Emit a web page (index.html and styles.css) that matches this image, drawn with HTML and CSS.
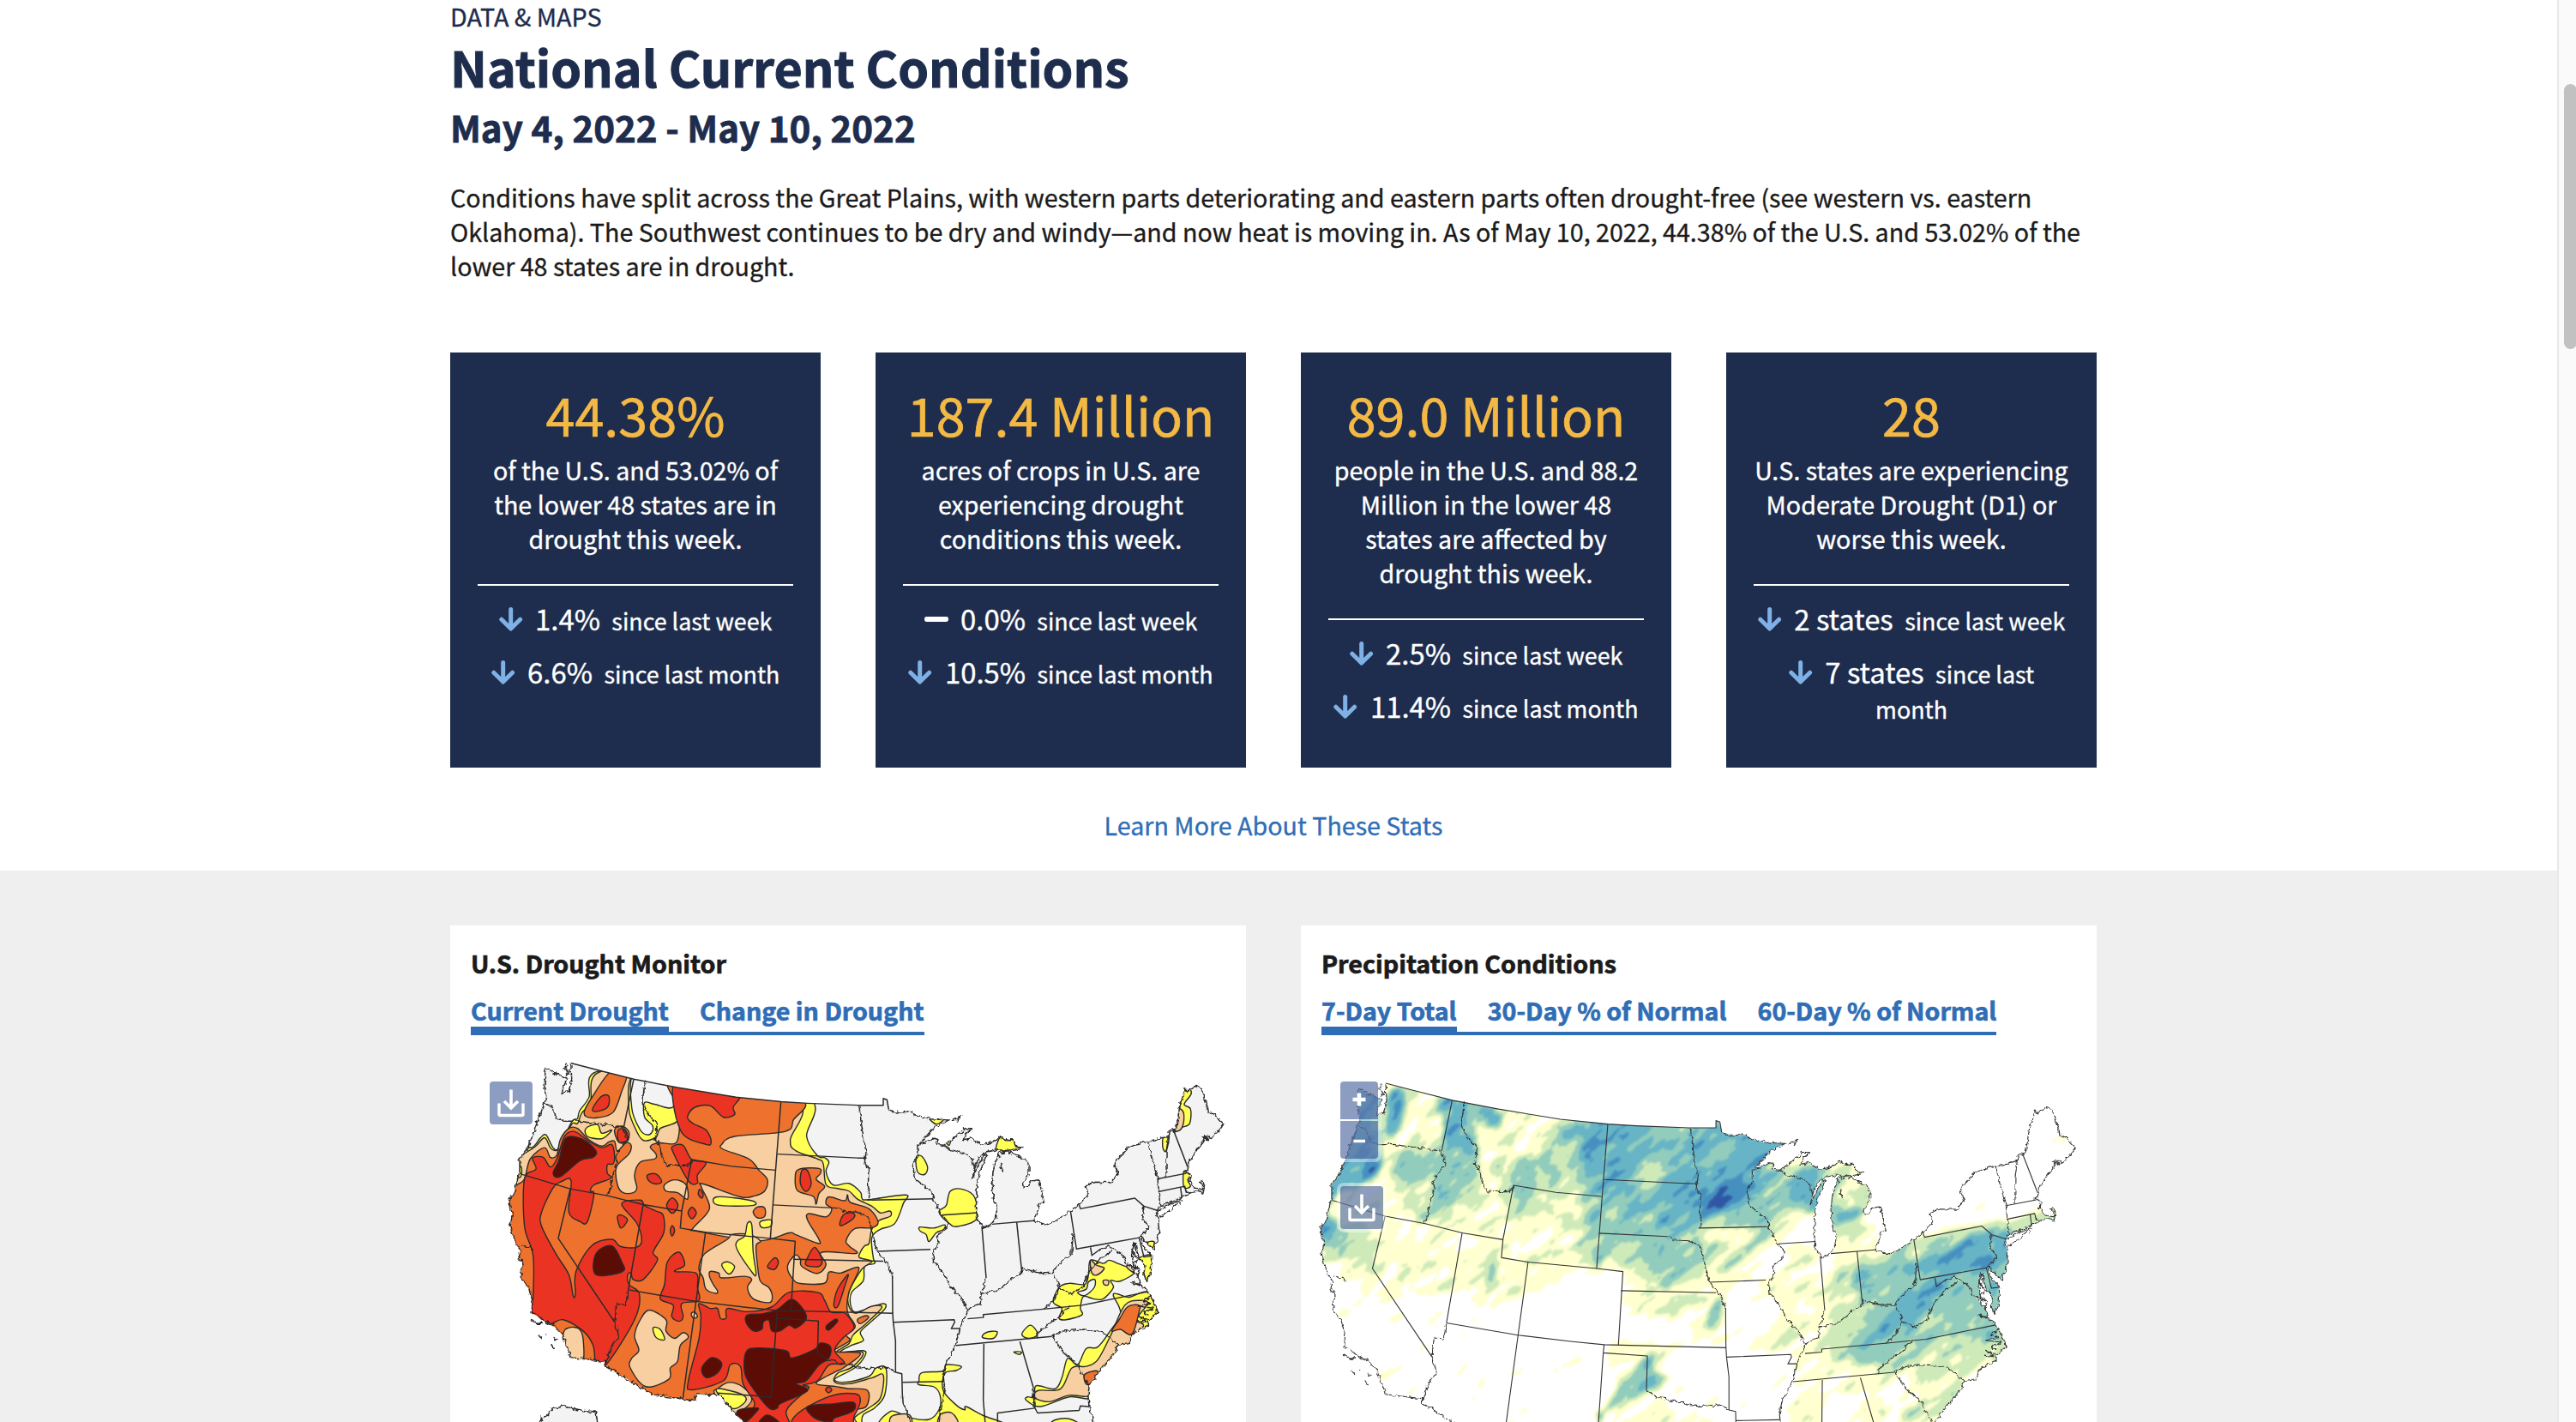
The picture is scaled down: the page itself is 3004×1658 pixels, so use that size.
FILE: index.html
```
<!DOCTYPE html>
<html lang="en">
<head>
<meta charset="utf-8">
<title>National Current Conditions</title>
<link rel="stylesheet" href="styles.css">
</head>
<body>
<svg class="sprite" aria-hidden="true">
  <symbol id="down" viewBox="0 0 28 28"><path d="M13.7 2.6V24M2.8 14.2L13.7 25L24.6 14.2" fill="none" stroke="#7fb1e6" stroke-width="5" stroke-linecap="round" stroke-linejoin="round"/></symbol>
  <symbol id="flat" viewBox="0 0 28 28"><rect x="0" y="11" width="28" height="6" rx="2.4" fill="#fff"/></symbol>
  <symbol id="save" viewBox="0 0 50 50"><path d="M25 9.5V31M17 23l8 8 8-8" fill="none" stroke="#fff" stroke-width="3.6"/><path d="M11 25.5v12.500q0 1.500 1.500 1.500h25q1.500 0 1.500-1.500v-12.500" fill="none" stroke="#fff" stroke-width="3.4"/></symbol>
</svg>
<div class="page">
  <main class="content">
    <section class="intro wrap">
      <p class="eyebrow">DATA &amp; MAPS</p>
      <h1 class="title">National Current Conditions</h1>
      <h2 class="dates">May 4, 2022 - May 10, 2022</h2>
      <p class="summary">Conditions have split across the Great Plains, with western parts deteriorating and eastern parts often drought-free (see western vs. eastern Oklahoma). The Southwest continues to be dry and windy—and now heat is moving in. As of May 10, 2022, 44.38% of the U.S. and 53.02% of the lower 48 states are in drought.</p>
      <div class="stats">
        <article class="stat">
          <p class="figure">44.38%</p>
          <p class="about">of the U.S. and 53.02% of the lower 48 states are in drought this week.</p>
          <hr class="rule">
          <p class="trend"><svg class="icon"><use href="#down"/></svg>1.4% <span class="since">since last week</span></p>
          <p class="trend"><svg class="icon"><use href="#down"/></svg>6.6% <span class="since">since last month</span></p>
        </article>
        <article class="stat">
          <p class="figure">187.4 Million</p>
          <p class="about">acres of crops in U.S. are experiencing drought conditions this week.</p>
          <hr class="rule">
          <p class="trend"><svg class="icon"><use href="#flat"/></svg>0.0% <span class="since">since last week</span></p>
          <p class="trend"><svg class="icon"><use href="#down"/></svg>10.5% <span class="since">since last month</span></p>
        </article>
        <article class="stat">
          <p class="figure">89.0 Million</p>
          <p class="about">people in the U.S. and 88.2 Million in the lower 48 states are affected by drought this week.</p>
          <hr class="rule">
          <p class="trend"><svg class="icon"><use href="#down"/></svg>2.5% <span class="since">since last week</span></p>
          <p class="trend"><svg class="icon"><use href="#down"/></svg>11.4% <span class="since">since last month</span></p>
        </article>
        <article class="stat">
          <p class="figure">28</p>
          <p class="about">U.S. states are experiencing Moderate Drought (D1) or worse this week.</p>
          <hr class="rule">
          <p class="trend"><svg class="icon"><use href="#down"/></svg>2 states <span class="since">since last week</span></p>
          <p class="trend"><svg class="icon"><use href="#down"/></svg>7 states <span class="since">since last month</span></p>
        </article>
      </div>
      <p class="more"><a class="link" href="#">Learn More About These Stats</a></p>
    </section>
    <section class="maps">
      <div class="panels wrap">
        <article class="panel">
          <h3 class="panel-title">U.S. Drought Monitor</h3>
          <nav class="tabs"><a class="tab active" href="#">Current Drought</a><a class="tab" href="#">Change in Drought</a></nav>
          <div class="map">
            <svg id="drought" class="canvas" viewBox="15 400 2784 1168" preserveAspectRatio="none"></svg>
            <div class="controls controls-drought">
              <button class="btn save" aria-label="Download"><svg class="glyph"><use href="#save"/></svg></button>
            </div>
          </div>
        </article>
        <article class="panel">
          <h3 class="panel-title">Precipitation Conditions</h3>
          <nav class="tabs"><a class="tab active" href="#">7-Day Total</a><a class="tab" href="#">30-Day % of Normal</a><a class="tab" href="#">60-Day % of Normal</a></nav>
          <div class="map">
            <svg id="precip" class="canvas" viewBox="21 400 2784 1168" preserveAspectRatio="none"></svg>
            <div class="controls controls-precip">
              <div class="halo zoomer">
                <button class="btn zoom-in" aria-label="Zoom in"><svg class="sign" viewBox="0 0 44 40"><path d="M14.500 19H29.500M22 11.500V26.500" stroke="#fff" stroke-width="4.500"/></svg></button>
                <button class="btn zoom-out" aria-label="Zoom out"><svg class="sign" viewBox="0 0 44 40"><path d="M15.500 21.500H29" stroke="#fff" stroke-width="3.500"/></svg></button>
              </div>
              <div class="halo">
                <button class="btn save" aria-label="Download"><svg class="glyph"><use href="#save"/></svg></button>
              </div>
            </div>
          </div>
        </article>
      </div>
    </section>
  </main>
  <div class="scrollbar"><div class="thumb"></div></div>
</div>
<script src="map.js"></script>
</body>
</html>
```
FILE: styles.css
```
* { box-sizing: border-box; }
body {
  margin: 0;
  height: 1658px;
  overflow: hidden;
  background: #fff;
  color: #1b1b1b;
  font-family: "Noto Sans CJK SC", "Noto Sans", sans-serif;
  font-size: 28.66px;
  line-height: 40px;
  -webkit-text-stroke: .35px;
}
h1, h2, h3, p { margin: 0; }
.sprite { display: none; }
.page { display: flex; height: 1658px; }
.content { flex: 1; overflow: hidden; }
.wrap { width: 1920px; margin-left: 525px; }

.eyebrow { color: #1e2d4d; font-size: 28.7px; line-height: 37px; }
.title { margin-top: 4.5px; color: #1e2d4d; font-size: 57.3px; line-height: 72px; -webkit-text-stroke: 1px; }
.dates { margin-top: 6px; color: #1e2d4d; font-size: 42.05px; line-height: 56px; -webkit-text-stroke: .8px; }
.summary { margin-top: 34px; }

.stats { display: grid; grid-template-columns: repeat(4, 432px); gap: 64px; margin-top: 81.5px; height: 484px; }
.stat { padding: 36px 32px 0; background: #1e2d4d; color: #fff; text-align: center; }
.figure { margin: 0 -16px 8.500px; color: #f4b944; font-size: 61.1px; line-height: 72px; -webkit-text-stroke: .7px; }
.rule { height: 2px; margin: 33px 0 18.500px; border: 0; background: #fff; }
.trend { margin-bottom: 21.400px; font-size: 32.9px; line-height: 40.600px; }
.icon { width: 28px; height: 28px; margin-right: 14.500px; vertical-align: -1px; }
.since { margin-left: 6px; font-size: 26.85px; line-height: 1; }
.more { padding: 47px 0 33px; text-align: center; }
.link { color: #2f6eb6; text-decoration: none; }

.maps { height: 643px; padding-top: 64px; background: #efefef; }
.panels { display: grid; grid-template-columns: 928px 928px; gap: 64px; }
.panel { height: 579px; padding-top: 23.500px; background: #fff; }
.panel-title { padding-left: 24px; font-size: 28.66px; line-height: 40px; -webkit-text-stroke: .7px; }
.tabs { display: flex; width: max-content; height: 50px; margin: 14.500px 0 13px 24px; border-bottom: 4px solid #2f6eb6; }
.tab { height: 50px; color: #2f6eb6; font-size: 28.62px; font-weight: 700; line-height: 42px; text-decoration: none; -webkit-text-stroke: .7px; }
.tab + .tab { margin-left: 36px; }
.active { border-bottom: 10px solid #2f6eb6; }

.map { position: relative; height: 438px; }
.canvas { display: block; width: 928px; height: 438px; }
.controls { position: absolute; top: 37px; left: 42px; }
.controls-drought { top: 41px; left: 46px; }
.halo { width: max-content; padding: 4px; border-radius: 8px; background: rgba(255, 255, 255, .4); }
.zoomer { display: grid; gap: 2px; margin-bottom: 24px; }
.btn { display: block; padding: 0; border: 0; background: rgba(28, 60, 132, .5); }
.save { width: 50px; height: 50px; border-radius: 4px; }
.zoom-in, .zoom-out { width: 44px; height: 44px; }
.zoom-in { border-radius: 4px 4px 0 0; }
.zoom-out { border-radius: 0 0 4px 4px; }
.glyph { display: block; width: 50px; height: 50px; }
.sign { display: block; width: 44px; height: 40px; }

.scrollbar { width: 22px; padding: 98px 0 0 6px; border-left: 2px solid #e8e8e8; background: #fafafa; overflow: hidden; }
.thumb { width: 15px; height: 309px; border-radius: 8px; background: #c1c1c1; }
```
FILE: map.js
```
// Geometry is kept as "x,y x,y" strings. East coordinates are offset by 1440.
const EAST = 1440;
const parse = (s, dx = 0, dy = 0, ky = 1) =>
  s.trim().split(/\s+/).map(p => { const [x, y] = p.split(',').map(Number); return [x + dx, y * ky + dy]; });
const W = s => parse(s);
const E = s => parse(s, EAST);
const D = s => parse(s, 960, 613.3, 0.8889);
const P = s => parse(s, 870, 480, 0.8889);
const line = (pts, close) => 'M' + pts.map(p => p[0] + ' ' + p[1]).join('L') + (close ? 'Z' : '');
function smooth(pts) {
  const n = pts.length, t = 0.17, at = i => pts[(i + n) % n];
  let d = 'M' + pts[0].join(' ');
  for (let i = 0; i < n; i++) {
    const a = at(i - 1), b = at(i), c = at(i + 1), e = at(i + 2);
    d += 'C' + [b[0] + (c[0] - a[0]) * t, b[1] + (c[1] - a[1]) * t, c[0] - (e[0] - b[0]) * t, c[1] - (e[1] - b[1]) * t, c[0], c[1]].map(v => v.toFixed(1)).join(' ');
  }
  return d + 'Z';
}

const border = W('437,452 550,478 657,502 810,528 1015,558 1172,572 1265,577 1440,583 1530,583 1530,562 1543,566 1549,596');
const coast = [
  ...E('109,598 150,606 180,602 210,617 250,626 320,629 270,650 240,680 215,705 240,697 270,686 282,690 275,704 300,708 330,690 360,668 375,655 400,655 380,668 370,690 400,685 430,705 455,702 490,690 500,682 515,690 545,690 553,710 580,714 525,724 545,735 570,745 590,752 600,770 600,800 580,825 583,838 595,838 605,820 630,815 640,835 652,885 640,890 628,915 617,942 655,953 690,945 745,912 775,892 810,857 795,835 830,822 885,823 912,797 900,770 905,755 950,710 1015,695 1090,680 1093,662 1115,655 1125,600 1128,580 1145,530 1155,540 1185,524 1205,533 1228,602 1245,608 1258,622 1280,640 1255,670 1232,685 1220,678 1205,700 1185,725 1158,760 1155,785 1145,790 1165,800 1160,820 1180,840 1207,845 1208,830 1192,820 1205,818 1214,835 1208,856 1185,850 1160,858 1145,862 1130,872 1060,897 1045,920 1052,940 1055,980 1050,1000 1035,1028 1012,1012 990,990 1000,1025 1028,1050 1027,1095 1010,1132 1002,1110 1005,1080 985,1060 975,1030 970,1008 960,1040 965,1075 978,1095 945,1075 985,1120 990,1140 960,1135 1005,1148 1020,1170 1030,1185 1048,1215 1048,1230 1015,1255 1015,1270 985,1280 960,1295 948,1325 915,1328 890,1365 870,1385 840,1415 822,1440 810,1455 807,1490 810,1520 832,1580'),
  ...W('1050,1580 1035,1560 1000,1530 975,1500 960,1484 875,1480 872,1502 725,1483 552,1390 560,1380 435,1367 430,1350 410,1300 385,1275 365,1262 300,1228 303,1190 290,1155 265,1120 262,1095 270,1075 255,1055 262,1035 245,1015 225,960 232,920 220,880 240,855 248,820 258,790 258,750 285,720 300,685 335,595 345,575 352,550 345,530 348,465 375,482 400,490 425,500 412,525 405,545 430,540 440,500 437,452')
];
const land = [...border, ...coast];
const lake = E('525,724 495,732 478,770 470,820 475,870 487,905 485,935 465,955 445,962 420,945 415,900 418,830 430,780 455,735 440,740 420,775 402,808 410,780 425,745 455,727 490,722');
const alaska = W('325,1575 335,1555 355,1548 375,1525 410,1517 445,1527 490,1533 525,1537 531,1575');
const straight = [
  W('657,502 622,652'), W('262,797 435,843 568,865 690,892 825,912'), W('435,843 393,997 590,1257'),
  W('690,892 638,1157'), W('638,1157 875,1193 1055,1212 1160,1221 1563,1230'), W('825,912 820,965 908,978 875,1193 829,1495'),
  W('908,978 1135,997 1222,1006 1207,1222'), W('860,752 825,912'), W('860,752 1000,773 1152,785'), W('1172,572 1135,997'),
  W('1160,735 1440,747 1472,747'), W('1143,893 1370,903'), W('1160,1221 1157,1245 1303,1254 1300,1357'), W('1157,1245 1138,1490 950,1478'),
  W('1215,1062 1530,1068'), E('32,878 265,874'), D('602,562 603,692 605,725 613,790 613,900 635,905 637,980'), D('550,477 735,470'),
  D('605,725 818,716 820,725 808,747 838,747'), D('637,935 780,932'), D('915,390 930,570'), D('775,350 900,342'),
  E('470,953 617,942'), E('557,947 575,1103'), E('775,892 780,905 970,872 1002,897 1048,910'), E('745,912 766,1030 985,995 1002,1055 1028,1052'),
  E('385,1247 440,1243 440,1234 650,1217 785,1205 1015,1163'), E('345,1330 680,1302'), E('442,1325 440,1500 447,1575'), E('568,1318 615,1460'),
  E('490,1575 490,1540 620,1525'), E('618,1520 630,1540 775,1532 780,1518 808,1520'), E('1050,812 1150,795'), E('1052,852 1145,835 1150,855'),
  E('1130,838 1135,872'), E('1105,660 1155,775'), E('815,1025 820,1050 850,1030')
];
const rivers = [
  W('345,578 375,588 385,622 410,633 460,632 530,640 622,652'), W('622,652 633,690 590,745 600,760 585,800 568,865'),
  W('697,508 688,565 700,600 740,645 730,690 745,700 755,740 772,770 800,768 820,772 855,770 860,752'),
  W('590,1257 605,1300 572,1345 565,1370 555,1392'), W('638,1157 628,1205 597,1200 590,1257'), W('1300,1357 1330,1372 1380,1385 1420,1392 1470,1402 1540,1398 1573,1412'),
  E('5,583 15,650 30,730 25,760 38,785 38,877'), D('410,325 430,337 480,340 515,355 530,400 545,470 585,520 602,562'),
  D('690,100 690,145 675,170 678,220 740,270 748,300 765,335 795,375 790,400 760,420 762,450 745,480 745,510 790,570 805,600 850,650 865,685 855,710 840,745 820,810 790,870 780,910 785,960 770,1030 765,1080'),
  D('637,980 640,1010 662,1060 662,1080'), D('930,570 912,630 910,660 880,670 865,685'), E('300,708 330,722 385,735 400,750 410,785'),
  E('435,1168 490,1160 530,1130 575,1103 575,1090 640,1105 680,1105 700,1080 750,1040 753,985'), E('685,1110 708,1150 680,1195 650,1217'),
  E('1002,897 995,935 1022,962 985,995'), E('850,1030 880,1020 930,1050 940,1075'), E('708,1150 740,1170 790,1150 810,1100 850,1060 890,1035'),
  E('740,1210 700,1245 630,1290 628,1308'), E('680,1302 720,1285 795,1280 860,1290 915,1328'), E('680,1302 720,1350 770,1390 810,1455'),
  E('615,1460 618,1520'), E('1015,695 1035,765 1050,812 1058,897'), E('1087,680 1080,730 1080,805'),
  E('1055,912 1090,890 1132,880 1100,905 1055,932'), W('265,1020 280,1022 305,1030'), W('425,455 415,470 432,480 420,492'),
  E('1030,1180 1000,1190 1022,1200 982,1208 1035,1214 1002,1228 1015,1236'), E('1018,1250 985,1240 1008,1256 975,1252'), E('975,1010 962,1040 980,1060 965,1080 988,1095 978,1110 990,1130')
];
const islets = [W('295,1252 315,1258 340,1262 315,1262'), W('325,1300 332,1304'), W('352,1297 354,1299'), W('377,1302 388,1312 378,1310'), W('368,1326 378,1340'),
  E('330,632 365,615 345,636'), E('490,735 500,745 495,740'), E('500,765 508,785 500,775'), E('1145,848 1165,856'), E('1205,680 1225,690 1215,675'), E('562,712 580,716')];

const NS = 'http://www.w3.org/2000/svg';
const drought = {
  D0: [
    W('540,476 500,560 468,600 460,625 440,635 395,715 375,715 350,675 330,685 300,715 240,715 100,900 150,1200 400,1420 860,1530 1045,1600 1455,1600 1455,1573 1460,1546 1500,1524 1535,1484 1540,1402 1505,1400 1480,1426 1400,1444 1360,1435 1430,1400 1465,1364 1460,1346 1380,1351 1420,1329 1460,1315 1450,1289 1480,1262 1535,1217 1530,1200 1470,1217 1430,1226 1415,1200 1420,1164 1460,1129 1465,1084 1500,1075 1495,1057 1490,995 1520,969 1570,951 1600,889 1608,862 1475,877 1455,871 1450,853 1410,826 1355,831 1330,791 1340,760 1325,746 1300,740 1262,680 1268,560 900,500'),
    E('325,850 370,845 410,870 418,935 350,960 320,950 285,915 310,895'), E('205,745 225,742 245,775 235,798 210,790'),
    E('218,962 265,965 305,955 300,970 275,980 250,1007 240,985 220,975'), E('250,622 275,620 300,628 275,642'), E('310,695 325,692 320,708'),
    E('500,680 515,690 545,690 553,710 580,714 525,724 485,722'), E('1145,520 1168,545 1143,580 1165,595 1162,640 1135,652 1105,665 1125,600'),
    E('1070,680 1090,678 1080,725 1068,715'), E('1142,788 1168,800 1155,815 1165,835 1142,838'), E('1015,1010 1038,1008 1030,1030'),
    E('985,1060 1028,1050 1035,1095 1010,1135 1000,1090'),
    E('815,1065 860,1075 880,1065 910,1075 970,1100 920,1130 885,1128 895,1150 860,1185 825,1185 790,1178 780,1215 785,1235 730,1250 705,1245 715,1215 685,1195 705,1150 740,1137 795,1140 808,1110'),
    E('895,1175 910,1170 950,1180 1015,1163 1060,1215 1015,1280 950,1335 870,1395 820,1455 812,1495 740,1490 640,1520 590,1500 595,1490 620,1490 625,1455 690,1465 715,1430 735,1370 770,1390 800,1340 840,1335 880,1290 920,1230'),
    E('575,1295 605,1267 630,1295 600,1308'), E('437,1305 450,1290 488,1287 475,1308'), E('547,1350 573,1350 565,1358'),
    E('215,1440 225,1415 300,1410 310,1390 362,1395 345,1408 305,1417 300,1470 345,1515 375,1530 380,1520 440,1548 520,1575 520,1600 100,1600 115,1535 185,1555 250,1560 285,1530 290,1490 270,1460 215,1452'), E('690,1562 740,1558 780,1580 680,1580')
  ],
  D1: [
    W('550,476 505,575 475,608 460,640 440,642 402,712 382,724 365,715 345,684 312,712 265,735 240,720 100,900 150,1200 400,1420 860,1530 1045,1600 1425,1600 1430,1555 1480,1524 1520,1493 1530,1422 1490,1431 1410,1449 1360,1444 1370,1417 1425,1395 1458,1351 1370,1351 1410,1324 1425,1297 1470,1262 1525,1212 1490,1208 1435,1230 1410,1208 1410,1164 1455,1093 1490,1069 1447,1057 1450,1040 1465,1020 1480,1013 1490,969 1515,942 1555,928 1553,912 1520,918 1490,897 1440,875 1410,850 1370,842 1330,830 1320,765 1300,750 1225,725 1205,690 1232,570 900,500'),
    E('1122,598 1140,605 1140,640 1125,662 1105,655'), E('815,1065 835,1080 863,1090 840,1110 820,1105'), E('860,1128 878,1128 876,1142 862,1140'),
    E('935,1205 990,1190 1015,1200 975,1250 1000,1270 950,1335 870,1395 820,1455 812,1488 740,1485 670,1505 620,1492 632,1470 710,1465 750,1400 800,1395 840,1375 885,1300'),
    E('290,1545 330,1540 350,1575 285,1580'), E('120,1550 180,1545 185,1580 120,1580'), E('945,1080 975,1095 970,1105 945,1090')
  ],
  mt0: [W('657,490 640,590 660,650 690,692 735,682 750,655 810,632 808,580 800,510')],
  mtn: [W('662,480 650,590 680,660 705,675 722,665 722,645 695,620 695,575 730,580 795,588 800,510')],
  d0pass: [E('808,1133 830,1125 828,1150 795,1175 770,1165 800,1155')],
  D2: [
    W('575,480 632,485 615,540 585,605 530,622 490,618 485,600 510,560'),
    W('100,880 200,860 250,830 275,812 295,750 345,715 365,745 388,738 400,690 430,655 460,655 500,690 545,710 570,697 590,695 600,725 630,700 648,708 640,735 597,775 600,830 620,855 655,855 668,840 660,800 680,760 730,750 735,735 715,712 745,700 805,700 818,640 815,590 803,500 1230,560 1215,630 1185,665 1010,680 965,705 970,720 1060,750 1095,785 1125,815 1115,850 1080,865 1030,868 900,828 895,840 922,905 865,965 880,975 1090,1005 1200,980 1222,985 1300,1012 1305,1000 1265,940 1270,920 1330,930 1350,905 1330,890 1340,868 1395,880 1405,862 1415,885 1480,905 1512,946 1490,964 1430,967 1400,1004 1412,1022 1435,1044 1315,1040 1330,1078 1300,1106 1245,1084 1240,1062 1222,1049 1195,1085 1215,1125 1245,1138 1325,1136 1340,1102 1380,1105 1445,1089 1410,1164 1405,1226 1432,1271 1400,1297 1412,1315 1360,1348 1450,1355 1390,1400 1360,1413 1295,1448 1360,1457 1405,1464 1475,1470 1470,1520 1415,1537 1400,1600 1045,1600 870,1530 500,1430 250,1330'),
    D('275,190 345,187 350,205 335,225 365,250 345,275 335,312 325,285 270,265 262,220'), D('115,340 130,322 155,325 155,355 130,360'),
    D('480,715 510,702 518,710 490,730'), E('945,1210 985,1205 985,1225 960,1295 920,1280 890,1285 915,1250'), E('795,1420 840,1410 822,1445 800,1450'), W('590,660 615,648 640,665 635,695 605,698')
  ],
  D1b: [
    W('1000,985 985,1000 905,1045 885,1090 900,1120 910,1155 945,1168 950,1160 935,1140 922,1115 925,1100 955,1105 965,1120 1045,1115 1070,1125 1055,1150 1075,1185 1130,1197 1142,1180 1130,1150 1100,1130 1090,1080 1085,1020 1100,1005 1060,985'),
    W('410,1295 430,1275 465,1278 480,1310 475,1390 400,1380'), W('712,1220 770,1250 770,1285 800,1308 830,1290 848,1305 820,1330 810,1380 785,1400 780,1435 700,1458 645,1400 650,1370 675,1345 660,1300 680,1250'),
    W('765,830 800,815 840,830 845,875 810,855 770,850'), W('858,1232 870,1226 880,1240 866,1245'), W('950,1465 990,1445 1040,1460 1070,1500 1025,1540 990,1550 940,1480')
  ],
  D0b: [
    W('490,655 530,643 545,670 580,660 560,680 540,688 495,680'), W('950,868 1070,880 1070,895 950,893'), W('1055,950 1070,955 1075,1040 1085,1110 1065,1095 1018,1030 1020,1005 1045,990'),
    W('965,1080 985,1070 1010,1085 990,1108'), W('1100,945 1138,940 1135,960 1105,963'), W('725,1275 750,1280 765,1312 735,1305'), W('255,770 265,780 262,805 248,805'), W('945,1468 1000,1472 1048,1490 1040,1512 1000,1525')
  ],
  D3: [
    W('275,812 315,782 303,748 340,745 365,775 388,750 415,680 450,665 500,695 545,715 580,705 590,740 585,765 565,768 565,795 578,810 520,830 505,850 518,860 495,945 470,945 430,915 438,818 405,820 375,840 335,915 335,960 385,1045 430,1110 445,1175 453,1170 455,1100 510,1020 580,1000 610,1022 665,1025 685,1005 668,950 615,890 680,878 695,895 735,912 760,925 762,980 725,1040 740,1065 690,1125 655,1125 648,1105 636,1110 640,1140 677,1170 660,1250 560,1390 525,1385 515,1330 480,1285 410,1250 360,1262 300,1230 305,1180 305,1050 275,960'),
    W('515,590 545,555 570,555 565,590 520,603'), W('603,660 628,660 635,690 605,697'), W('808,500 1018,540 1005,590 1010,612 970,620 925,585 870,590 845,620 865,640 910,660 928,695 910,705 820,660'),
    W('795,710 830,708 860,752 910,762 880,800 880,825 850,820 795,730'), W('705,800 735,797 755,820 735,828 710,818'), W('792,871 812,895 792,919 772,895'), W('861,900 876,918 861,936 847,918'), W('888,844 900,860 895,872 883,860'), W('792,957 800,973 791,990 785,973'),
    W('600,930 615,925 635,940 612,965'), W('775,1070 815,1040 835,1080 800,1100 875,1105 880,1150 885,1190 825,1200 830,1240 815,1255 790,1240 795,1205 750,1185 765,1140'),
    D('285,195 305,195 318,240 300,268 280,240'), D('418,385 430,350 460,342 470,355 440,380'), D('305,500 330,463 355,505 345,530 300,525'), D('165,530 190,500 203,515 190,540'), D('447,558 410,610 397,665 412,668 435,600'), D('368,960 380,952 390,962 378,972'),
    W('885,1200 925,1215 950,1215 960,1245 980,1245 985,1215 1055,1225 1140,1210 1200,1165 1300,1165 1325,1190 1345,1225 1375,1228 1400,1232 1428,1275 1390,1306 1360,1346 1395,1386 1340,1391 1300,1440 1250,1453 1270,1462 1220,1502 1190,1537 1200,1600 1045,1600 1060,1540 1080,1510 1040,1450 1030,1395 995,1390 970,1440 860,1468 848,1440 885,1310 892,1240'),
    D('270,1045 380,985 470,975 490,1000 470,1050 440,1090 265,1090')
  ],
  D4: [
    W('420,685 480,690 525,725 515,745 470,755 400,805 375,795 395,755'), W('525,1045 580,1020 615,1070 618,1100 525,1110'), W('895,1400 930,1368 965,1385 950,1415 910,1430'),
    D('95,700 150,695 200,680 250,645 290,680 300,715 265,745 240,735 210,755 180,755 170,718 150,725 145,750 115,755 90,725'), D('370,740 400,715 410,722 380,752'),
    D('90,830 130,815 230,825 250,850 330,820 350,798 385,810 380,850 345,875 300,930 265,940 305,965 210,1010 200,1025 170,1025 110,950 85,900'), D('305,1020 400,1010 465,1005 465,1035 400,1060 385,1074 330,1060'), D('60,1035 130,1025 120,1045 90,1074 70,1084'), D('135,1084 165,1050 210,1084')
  ]
};
const colors = { D0: '#ffff54', D1: '#f7cfa0', mt0: '#ffff54', mtn: '#f3f3f3', d0pass: '#f3f3f3', D2: '#ee722e', D1b: '#f7cfa0', D0b: '#ffff54', D3: '#eb3324', D4: '#5b0c05' };

const thin = 'vector-effect="non-scaling-stroke" stroke-linejoin="round"';
const region = 'filterUnits="userSpaceOnUse" x="-100" y="300" width="3100" height="1400"';
const rough = id => `<filter id="${id}" ${region}><feTurbulence type="fractalNoise" baseFrequency=".07" numOctaves="2" seed="4"/><feDisplacementMap in="SourceGraphic" scale="17" xChannelSelector="R" yChannelSelector="G"/></filter>`;
const lines = (f, color, w) =>
  `<g fill="none" stroke="${color}" stroke-width="${w}">` +
  [border, ...straight].map(p => `<path ${thin} d="${line(p)}"/>`).join('') +
  `<g filter="url(#${f})">` + [coast, ...rivers, ...islets].map(p => `<path ${thin} d="${line(p)}"/>`).join('') + '</g></g>';

let a = `<defs>${rough('r1')}<clipPath id="land1"><path d="${line(land, 1)}"/></clipPath></defs><path fill="#f3f3f3" d="${line(land, 1)}"/><g clip-path="url(#land1)" stroke="#2b2b2b" stroke-width="1.4">`;
for (const k in drought) for (const p of drought[k]) a += `<path ${thin} fill="${colors[k]}" d="${smooth(p)}"/>`;
a += `</g><g filter="url(#r1)"><path ${thin} fill="#fff" stroke="#2b2b2b" stroke-width="1.6" d="${line(lake, 1)}"/><path ${thin} fill="#f3f3f3" stroke="#2b2b2b" stroke-width="1.6" d="${line(alaska, 1)}"/></g>` + lines('r1', '#2b2b2b', 1.5);
document.getElementById('drought').innerHTML = a;

// Rainfall: polygons by band (0 dry to 6 wettest), blurred, mixed with slanted noise, then cut into bands.
const rain = [
  [0, W('60,1125 180,1120 240,1170 330,1200 450,1170 600,1190 700,1215 820,1170 950,1140 1060,1110 1150,1110 1145,1180 1140,1320 1085,1330 1040,1600 0,1600')],
  [0, P('440,980 640,970 655,1240 560,1200 430,1160')], [0, P('650,740 770,760 820,860 700,960 645,980')], [0, P('650,1010 870,1000 840,1240 650,1240')], [0, P('290,860 480,870 500,940 290,940')],
  [0, P('700,690 820,610 830,690 740,710')], [0, P('850,575 940,530 945,600 850,600')], [0, E('700,948 950,945 1050,935 1200,890 1400,800 1400,400 700,500')], [0, E('540,935 615,900 610,960 560,960')], [0, E('420,1490 520,1490 530,1600 420,1600')],
  [0, E('620,1500 680,1440 670,1560')], [0, W('325,1080 355,1065 345,1100')], [0, W('755,1010 790,1000 770,1040')],
  [2, W('90,950 260,960 260,1050 90,1060')], [2, W('340,740 520,700 560,900 480,960 360,860')], [2, W('920,640 1100,640 1080,1080 980,1020 1000,900 870,860 860,740')], [2, W('850,880 970,920 950,960 870,920')], [2, W('700,770 850,740 850,900 740,900')],
  [2, P('200,570 400,580 600,620 500,740 380,730 230,640')], [2, P('560,590 700,600 800,530 770,600 640,700 600,660')], [2, P('390,840 480,770 560,780 500,820')], [2, E('20,900 250,880 360,890 200,960')], [2, E('440,880 570,830 540,960 440,980')],
  [2, E('240,780 420,770 560,770 500,820 400,860')], [2, E('460,1100 620,1050 740,1000 1060,950 1060,1300 950,1400 800,1420 640,1400 440,1350')], [2, E('1050,970 1220,900 1230,960 1060,1040')], [2, E('660,1540 760,1500 900,1440 880,1480 760,1570')],
  [3, W('500,560 700,590 720,660 640,650 650,760 620,860 540,890 490,850 470,780 400,820 350,790 420,730 500,740 540,700')], [3, W('760,800 830,760 840,860 790,890')], [3, W('860,740 940,740 930,800 880,800')], [3, W('250,1050 272,1060 272,1110')], [3, W('685,1040 705,1040 700,1130 670,1150')],
  [3, W('940,630 1100,640 1080,1060 1040,1040 1010,860 930,740')], [3, W('1095,600 1480,600 1740,690 1610,780 1800,790 1880,850 1850,920 1680,900 1660,960 1440,970 1400,1060 1300,1160 1250,1100 1150,1000 1060,1010')],
  [3, P('390,600 550,590 545,650 480,680 400,680')], [3, P('640,670 780,550 790,570 680,665')], [3, P('570,880 600,790 630,820 600,900')], [3, P('300,1060 350,1000 385,980 380,1040 440,1060 400,1110 330,1130 220,1190 190,1230 230,1150')],
  [3, E('160,790 270,780 420,770 430,810 370,880 300,890 160,930')], [4, E('455,915 530,905 525,930 460,945')], [3, E('520,1090 740,1060 750,1010 900,985 1060,975 1060,1120 1020,1270 1050,1330 950,1300 850,1310 700,1340 560,1390 500,1330 560,1260 530,1180')], [3, E('1050,1000 1140,960 1150,990 1060,1040')],
  [4, W('230,480 300,480 300,700 290,800 150,860 60,1000 60,800')], [4, W('345,530 385,550 370,640 320,680 320,580')], [4, W('100,920 155,960 130,1010 90,1010')], [4, W('525,560 590,570 640,720 600,740 560,700 530,730')], [4, W('640,580 700,600 700,640 660,620')],
  [4, W('1000,640 1100,630 1090,850 1050,860 1010,760')], [4, W('1100,620 1260,630 1230,740 1180,800 1090,810')], [4, W('1270,820 1400,740 1350,700 1400,640 1500,640 1540,600 1780,690 1610,790 1640,860 1560,900 1450,930 1380,980 1290,960 1240,900')],
  [4, E('300,820 380,800 370,880 300,870')], [4, E('750,1060 850,1020 1000,985 1080,1000 1050,1100 900,1100 800,1200 700,1270 640,1320 600,1290 640,1230 700,1160 760,1110')], [4, P('340,1010 385,985 370,1040')], [4, P('180,1190 210,1190 200,1240')],
  [3, P('560,320 620,250 690,240 640,300 560,350')], [3, P('330,330 420,240 490,205 500,230 420,300 400,340')], [3, P('220,440 330,400 400,390 340,440 250,520')],
  [5, P('560,520 570,430 640,380 700,370 690,430 620,470')], [5, W('340,570 375,565 360,625 325,650')], [5, P('255,260 265,220 310,205 300,240')], [5, W('230,720 290,740 280,800 240,800')], [6, P('605,460 630,395 665,425 630,465')]
];
const table = c => ['ffffff', 'ffffcf', 'cfeaba', '93ccbd', '66b4c5', '4690c0', '3158a5'].map(h => (parseInt(h.substr(c, 2), 16) / 255).toFixed(3)).join(' ');
const levels = [5, 52, 90, 128, 166, 203, 240];
const grey = k => `rgb(${levels[k]},${levels[k]},${levels[k]})`;
const shift = 'translate(-144 37) scale(1.057)';
let b = `<defs>${rough('r2')}<clipPath id="land2"><path transform="${shift}" d="${line(land, 1)}"/></clipPath>
<filter id="bands" filterUnits="userSpaceOnUse" x="-300" y="-400" width="3400" height="2800" color-interpolation-filters="sRGB"><feGaussianBlur in="SourceGraphic" stdDeviation="11" result="s"/>
<feTurbulence type="fractalNoise" baseFrequency=".009 .024" numOctaves="3" seed="11"/><feColorMatrix values="1 0 0 0 0 1 0 0 0 0 1 0 0 0 0 0 0 0 0 1" result="n"/>
<feComposite in="s" in2="n" operator="arithmetic" k2="1" k3=".5" k4="-.25"/><feComponentTransfer><feFuncR type="discrete" tableValues="${table(0)}"/><feFuncG type="discrete" tableValues="${table(2)}"/><feFuncB type="discrete" tableValues="${table(4)}"/></feComponentTransfer><feGaussianBlur stdDeviation="2.800"/></filter></defs>
<g clip-path="url(#land2)"><g transform="rotate(-35 1400 1000)"><g filter="url(#bands)"><g transform="rotate(35 1400 1000)"><rect x="-1000" y="-1000" width="5000" height="4000" fill="${grey(1)}"/>`;
for (const [k, p] of rain) b += `<path fill="${grey(k)}" d="${smooth(p)}"/>`;
b += `</g></g></g></g><g transform="${shift}"><g filter="url(#r2)"><path ${thin} fill="#fff" stroke="#333" d="${line(lake, 1)}"/></g>${lines('r2', '#333', 1.1)}</g>`;
document.getElementById('precip').innerHTML = b;
```
